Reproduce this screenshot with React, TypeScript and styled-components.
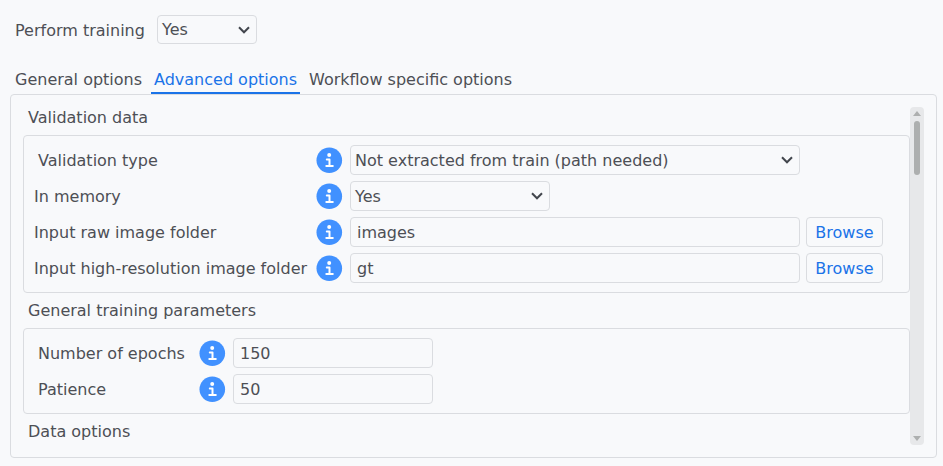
import React from "react";
import styled, { createGlobalStyle } from "styled-components";

const border = "#dadce0";

const GlobalStyle = createGlobalStyle`
  * { box-sizing: border-box; }
  body {
    margin: 0;
    background: #f8f9fb;
    color: #4d4f55;
    font: 16px/20px "DejaVu Sans", sans-serif;
    overflow: hidden;
  }
`;

const Page = styled.main`
  display: flex;
  flex-direction: column;
  width: 943px;
  height: 466px;
  padding: 15px 6px 8px 10px;
`;

const TopBar = styled.div`
  display: flex;
  align-items: center;
  height: 29px;
  padding-left: 5px;
`;

const TopLabel = styled.span`
  width: 142px;
  padding-top: 2px;
`;

const Tabs = styled.nav`
  display: flex;
  height: 24px;
  margin-top: 26px;
  padding-left: 2px;
`;

const Tab = styled.div<{ $active?: boolean; $width: number }>`
  width: ${(p) => p.$width}px;
  padding-left: 3px;
  white-space: nowrap;
  color: ${(p) => (p.$active ? "#1a73e8" : "inherit")};
  border-bottom: 2px solid ${(p) => (p.$active ? "#1a73e8" : "transparent")};
  margin-right: ${(p) => (p.$active ? 6 : 0)}px;
`;

const Panel = styled.section`
  display: flex;
  height: 364px;
  padding: 12px;
  border: 1px solid ${border};
  border-radius: 4px;
`;

const Content = styled.div`
  width: 887px;
  height: 338px;
  overflow: hidden;
`;

const Heading = styled.h2<{ $height: number }>`
  height: ${(p) => p.$height}px;
  margin: 0;
  padding: ${(p) => p.$height - 27}px 0 0 5px;
  font: inherit;
`;

const Group = styled.div<{ $label: number }>`
  display: grid;
  grid-template-columns: ${(p) => p.$label}px 34px auto;
  grid-auto-rows: 30px;
  row-gap: 6px;
  align-items: center;
  padding: 9px 10px;
  border: 1px solid ${border};
  border-radius: 4px;
`;

const Label = styled.label<{ $indent?: boolean }>`
  padding-top: 2px;
  padding-left: ${(p) => (p.$indent ? 4 : 0)}px;
  white-space: nowrap;
`;

const Controls = styled.div`
  display: flex;
  gap: 6px;
`;

const Field = styled.div<{ $width: number; $compact?: boolean; $select?: boolean }>`
  display: flex;
  align-items: center;
  justify-content: space-between;
  width: ${(p) => p.$width}px;
  height: ${(p) => (p.$compact ? 29 : 30)}px;
  padding: 0 6px 0 ${(p) => (p.$select ? 4 : 6)}px;
  border: 1px solid ${border};
  border-radius: 4px;
  white-space: nowrap;
`;

const Value = styled.span<{ $compact?: boolean }>`
  padding-top: ${(p) => (p.$compact ? 0 : 2)}px;
`;

const BrowseButton = styled.button`
  width: 77px;
  height: 30px;
  padding: 2px 0 0;
  border: 1px solid ${border};
  border-radius: 4px;
  background: transparent;
  color: #1a73e8;
  font: inherit;
`;

const Icon = styled.svg`
  display: block;
  flex: none;
`;

const Track = styled.div`
  display: flex;
  flex-direction: column;
  align-items: center;
  width: 14px;
  height: 338px;
  padding: 4px 0;
  border-radius: 4px;
  background: #e7e8ea;
`;

const Thumb = styled.div`
  width: 6px;
  height: 54px;
  margin: 5px 0 auto;
  border-radius: 3px;
  background: #adafaf;
`;

const InfoIcon = () => (
  <Icon width="27" height="26" viewBox="0 0 27 26">
    <circle cx="13.3" cy="13.2" r="12.8" fill="#4191ff" />
    <circle cx="13.2" cy="7.9" r="2" fill="#fff" />
    <path
      d="M10.8 12.4h2.7v6.4M10.3 19h6.5"
      fill="none"
      stroke="#fff"
      strokeWidth="2"
      strokeLinecap="round"
      strokeLinejoin="round"
    />
  </Icon>
);

const Chevron = () => (
  <Icon width="12" height="8" viewBox="0 0 12 8">
    <path d="M1 1.3l5 5 5-5" fill="none" stroke="#42464d" strokeWidth="2" />
  </Icon>
);

const Arrow = ({ down }: { down?: boolean }) => (
  <Icon width="8" height="5" viewBox="0 0 8 5">
    <path d={down ? "M0 0h8L4 5z" : "M0 5h8L4 0z"} fill="#adafaf" />
  </Icon>
);

type SelectProps = { width: number; compact?: boolean; value: string };

const Select = ({ width, compact, value }: SelectProps) => (
  <Field $width={width} $compact={compact} $select>
    <Value $compact={compact}>{value}</Value>
    <Chevron />
  </Field>
);

const Input = ({ width, value }: { width: number; value: string }) => (
  <Field $width={width}>
    <Value>{value}</Value>
  </Field>
);

export default function App() {
  return (
    <>
      <GlobalStyle />
      <Page>
        <TopBar>
          <TopLabel>Perform training</TopLabel>
          <Select width={100} compact value="Yes" />
        </TopBar>
        <Tabs>
          <Tab $width={139}>General options</Tab>
          <Tab $width={149} $active>Advanced options</Tab>
          <Tab $width={210}>Workflow specific options</Tab>
        </Tabs>
        <Panel>
          <Content>
            <Heading $height={28}>Validation data</Heading>
            <Group $label={282}>
              <Label $indent>Validation type</Label>
              <InfoIcon />
              <Select width={450} value="Not extracted from train (path needed)" />
              <Label>In memory</Label>
              <InfoIcon />
              <Select width={200} value="Yes" />
              <Label>Input raw image folder</Label>
              <InfoIcon />
              <Controls>
                <Input width={450} value="images" />
                <BrowseButton>Browse</BrowseButton>
              </Controls>
              <Label>Input high-resolution image folder</Label>
              <InfoIcon />
              <Controls>
                <Input width={450} value="gt" />
                <BrowseButton>Browse</BrowseButton>
              </Controls>
            </Group>
            <Heading $height={35}>General training parameters</Heading>
            <Group $label={165}>
              <Label $indent>Number of epochs</Label>
              <InfoIcon />
              <Input width={200} value="150" />
              <Label $indent>Patience</Label>
              <InfoIcon />
              <Input width={200} value="50" />
            </Group>
            <Heading $height={35}>Data options</Heading>
          </Content>
          <Track>
            <Arrow />
            <Thumb />
            <Arrow down />
          </Track>
        </Panel>
      </Page>
    </>
  );
}
